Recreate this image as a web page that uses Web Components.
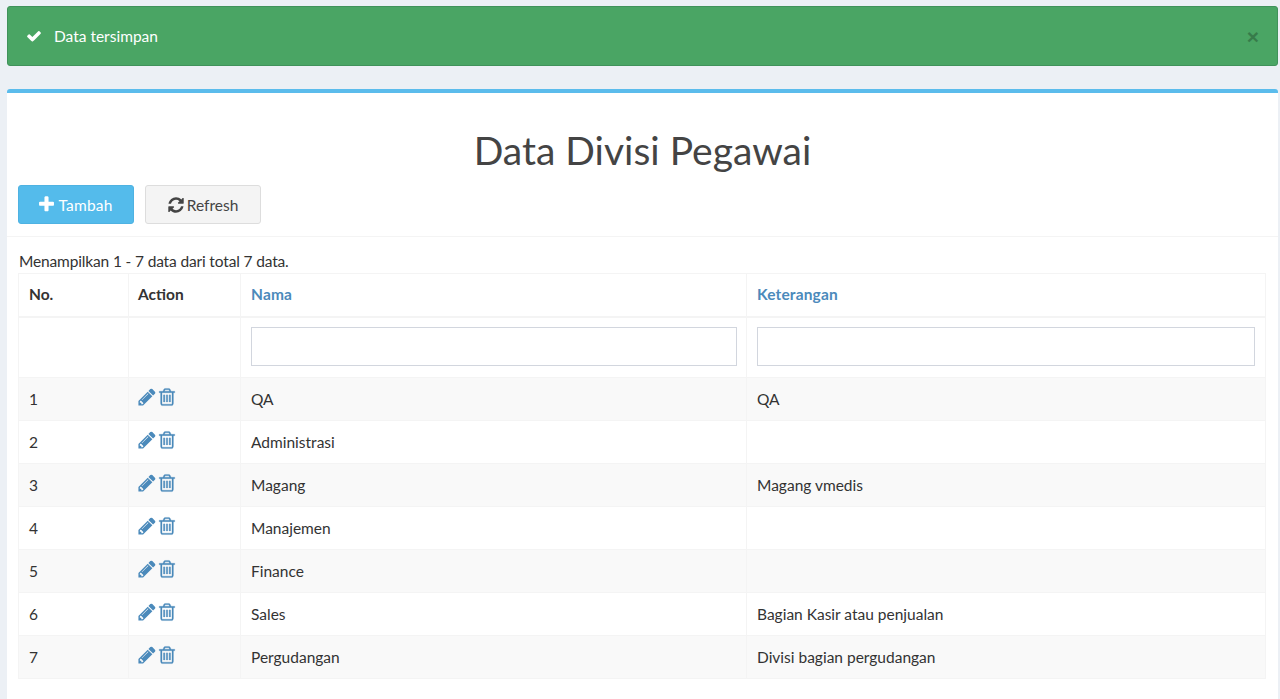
<!DOCTYPE html>
<html>
<head>
<meta charset="utf-8">
<title>Data Divisi Pegawai</title>
<style>
  html, body { margin: 0; height: 699px; overflow: hidden; }
  body {
    background: #ecf0f5;
    color: #333;
    font: 15.5px/20px Lato, "Open Sans", sans-serif;
  }
</style>
</head>
<body>
<page-shell>
  <app-alert>Data tersimpan</app-alert>
  <app-box>
    <span slot="title">Data Divisi Pegawai</span>
    <app-button slot="tools" kind="info" icon="plus">Tambah</app-button>
    <app-button slot="tools" icon="refresh">Refresh</app-button>
    <data-table summary="Menampilkan 1 - 7 data dari total 7 data."></data-table>
  </app-box>
</page-shell>

<script>
const ICONS = {
  check: 'M1671 566q0 40-28 68l-724 724-136 136q-28 28-68 28t-68-28l-136-136-362-362q-28-28-28-68t28-68l136-136q28-28 68-28t68 28l294 295 656-657q28-28 68-28t68 28l136 136q28 28 28 68z',
  plus: 'M1600 736v192q0 40-28 68t-68 28h-416v416q0 40-28 68t-68 28h-192q-40 0-68-28t-28-68v-416h-416q-40 0-68-28t-28-68v-192q0-40 28-68t68-28h416v-416q0-40 28-68t68-28h192q40 0 68 28t28 68v416h416q40 0 68 28t28 68z',
  refresh: 'M1639 1056q0 5-1 7-64 268-268 434.5t-478 166.5q-146 0-282.5-55t-243.5-157l-129 129q-19 19-45 19t-45-19-19-45v-448q0-26 19-45t45-19h448q26 0 45 19t19 45-19 45l-137 137q71 66 161 102t187 36q134 0 250-65t186-179q11-17 53-117 8-23 30-23h192q13 0 22.5 9.5t9.5 22.5zm25-800v448q0 26-19 45t-45 19h-448q-26 0-45-19t-19-45 19-45l138-138q-148-137-349-137-134 0-250 65t-186 179q-11 17-53 117-8 23-30 23h-199q-13 0-22.5-9.5t-9.5-22.5v-7q65-268 270-434.5t480-166.5q146 0 284 55.5t245 156.5l130-129q19-19 45-19t45 19 19 45z',
  pencil: 'M491 1536l91-91-235-235-91 91v107h128v128h107zm523-928q0-22-22-22-10 0-17 7l-542 542q-7 7-7 17 0 22 22 22 10 0 17-7l542-542q7-7 7-17zm-54-192l416 416-832 832h-416v-416zm683 96q0 53-37 90l-166 166-416-416 166-165q36-38 90-38 53 0 91 38l235 234q37 39 37 91z',
  trash: 'M704 736v576q0 14-9 23t-23 9h-64q-14 0-23-9t-9-23v-576q0-14 9-23t23-9h64q14 0 23 9t9 23zm256 0v576q0 14-9 23t-23 9h-64q-14 0-23-9t-9-23v-576q0-14 9-23t23-9h64q14 0 23 9t9 23zm256 0v576q0 14-9 23t-23 9h-64q-14 0-23-9t-9-23v-576q0-14 9-23t23-9h64q14 0 23 9t9 23zm128 724v-948h-896v948q0 22 7 40.5t14.5 27 10.5 8.5h832q3 0 10.5-8.5t14.5-27 7-40.5zm-672-1076h448l-48-117q-7-9-17-11h-317q-10 2-17 11zm928 32v64q0 14-9 23t-23 9h-96v948q0 83-47 143.5t-113 60.5h-832q-66 0-113-58.5t-47-141.5v-952h-96q-14 0-23-9t-9-23v-64q0-14 9-23t23-9h309l70-167q15-37 54-63t79-26h320q40 0 79 26t54 63l70 167h309q14 0 23 9t9 23z'
};

class FaIcon extends HTMLElement {
  constructor() {
    super();
    const size = this.getAttribute('size') || 16;
    const bold = this.getAttribute('bold') || 0;
    this.attachShadow({mode: 'open'}).innerHTML = `
      <style>
        :host { display: inline-flex; }
        svg { display: block; fill: currentColor; stroke: currentColor; }
      </style>
      <svg width="${size}" height="${size}" viewBox="0 0 1792 1792" stroke-width="${bold}">
        <path d="${ICONS[this.getAttribute('name')]}"/>
      </svg>`;
  }
}
customElements.define('fa-icon', FaIcon);

class PageShell extends HTMLElement {
  constructor() {
    super();
    this.attachShadow({mode: 'open'}).innerHTML = `
      <style>
        :host {
          display: flex;
          flex-direction: column;
          gap: 23px;
          padding: 6px 2px 0 7px;
        }
      </style>
      <slot></slot>`;
  }
}
customElements.define('page-shell', PageShell);

class AppAlert extends HTMLElement {
  constructor() {
    super();
    this.attachShadow({mode: 'open'}).innerHTML = `
      <style>
        :host {
          display: flex;
          align-items: center;
          gap: 12px;
          height: 60px;
          box-sizing: border-box;
          padding: 0 18px;
          background: #4aa564;
          border: 1px solid #40925a;
          border-radius: 3px;
          color: #fff;
        }
        .text { flex: 1; }
        .close {
          font: bold 21px/1 "Liberation Sans", sans-serif;
          color: #000;
          opacity: .25;
        }
      </style>
      <fa-icon name="check" size="16"></fa-icon>
      <span class="text"><slot></slot></span>
      <span class="close">×</span>`;
  }
}
customElements.define('app-alert', AppAlert);

class AppBox extends HTMLElement {
  constructor() {
    super();
    this.attachShadow({mode: 'open'}).innerHTML = `
      <style>
        :host {
          display: block;
          background: #fff;
          border-top: 4px solid #5bbcec;
          border-radius: 3px 3px 0 0;
          padding-bottom: 22px;
        }
        h1 {
          margin: 0;
          padding: 31px 0 0 0;
          height: 61px;
          font-size: 39px;
          line-height: 52px;
          font-weight: 400;
          text-align: center;
          color: #444;
        }
        .tools {
          display: flex;
          gap: 11px;
          padding: 0 11px 12px;
          border-bottom: 1px solid #f4f4f4;
        }
        .body { padding: 13px 12px 0 11px; }
      </style>
      <h1><slot name="title"></slot></h1>
      <div class="tools"><slot name="tools"></slot></div>
      <div class="body"><slot></slot></div>`;
  }
}
customElements.define('app-box', AppBox);

class AppButton extends HTMLElement {
  constructor() {
    super();
    const icon = this.getAttribute('icon');
    this.attachShadow({mode: 'open'}).innerHTML = `
      <style>
        :host {
          display: inline-flex;
          align-items: center;
          justify-content: center;
          gap: 2px;
          width: 116px;
          height: 39px;
          box-sizing: border-box;
          border: 1px solid #ddd;
          border-radius: 3px;
          background: #f4f4f4;
          color: #444;
          padding-right: 1px;
        }
        :host([kind="info"]) {
          background: #54bbeb;
          border-color: #4eb2e2;
          color: #fff;
          letter-spacing: .2px;
          padding-right: 2px;
        }
      </style>
      <fa-icon name="${icon}" size="${icon === 'plus' ? 19 : 18}"></fa-icon>
      <slot></slot>`;
  }
}
customElements.define('app-button', AppButton);

const COLUMNS = [
  {label: 'No.', width: 110},
  {label: 'Action', width: 112},
  {label: 'Nama', width: 506, sort: true},
  {label: 'Keterangan', sort: true}
];

const DIVISI = [
  ['QA', 'QA'],
  ['Administrasi', ''],
  ['Magang', 'Magang vmedis'],
  ['Manajemen', ''],
  ['Finance', ''],
  ['Sales', 'Bagian Kasir atau penjualan'],
  ['Pergudangan', 'Divisi bagian pergudangan']
];

class DataTable extends HTMLElement {
  constructor() {
    super();
    const head = COLUMNS.map(c =>
      `<th style="${c.width ? `width:${c.width}px` : ''}" class="${c.sort ? 'sort' : ''}">${c.label}</th>`).join('');
    const rows = DIVISI.map((d, i) => `
      <tr>
        <td>${i + 1}</td>
        <td><span class="actions"><fa-icon name="pencil" size="20"></fa-icon><fa-icon name="trash" size="20" bold="25"></fa-icon></span></td>
        <td>${d[0]}</td>
        <td>${d[1]}</td>
      </tr>`).join('');
    this.attachShadow({mode: 'open'}).innerHTML = `
      <style>
        :host { display: block; }
        .summary { height: 23px; line-height: 22px; padding-left: 1px; letter-spacing: -.15px; }
        table {
          width: 100%;
          table-layout: fixed;
          border-collapse: collapse;
          border: 1px solid #f4f4f4;
        }
        th, td {
          border: 1px solid #f4f4f4;
          padding: 0 10px;
          text-align: left;
          box-sizing: border-box;
        }
        th:nth-child(2) { padding-left: 9px; }
        thead tr:first-child th { height: 43px; padding-bottom: 2px; border-bottom-width: 2px; font-weight: 700; }
        th.sort { color: #4b8abb; letter-spacing: .15px; }
        .filters td { height: 61px; padding-bottom: 2px; }
        .filters td:nth-child(3) { padding-right: 9px; }
        input {
          display: block;
          width: 100%;
          height: 39px;
          box-sizing: border-box;
          border: 1px solid #d2d6de;
          background: #fff;
          margin: 0;
        }
        tbody tr { height: 43px; }
        tbody tr:nth-child(odd) { background: #f9f9f9; }
        tbody td:nth-child(2) { padding-left: 8px; }
        .actions {
          display: flex;
          gap: 0;
          color: #4b8abb;
          margin: -4px 0 0 0;
        }
      </style>
      <div class="summary">${this.getAttribute('summary')}</div>
      <table>
        <thead>
          <tr>${head}</tr>
          <tr class="filters"><td></td><td></td><td><input></td><td><input></td></tr>
        </thead>
        <tbody>${rows}</tbody>
      </table>`;
  }
}
customElements.define('data-table', DataTable);
</script>
</body>
</html>
